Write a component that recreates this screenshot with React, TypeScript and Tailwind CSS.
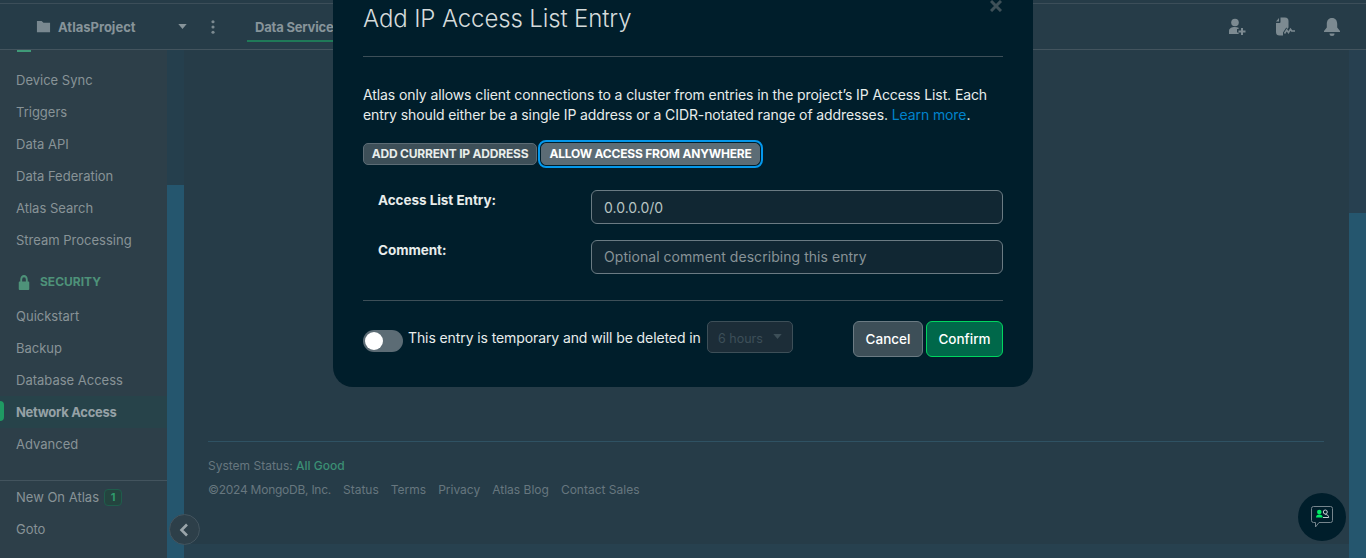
const topItems = ["Device Sync", "Triggers", "Data API", "Data Federation", "Atlas Search", "Stream Processing"];
const securityItems = ["Quickstart", "Backup", "Database Access", "Network Access", "Advanced"];
const footerLinks = ["Status", "Terms", "Privacy", "Atlas Blog", "Contact Sales"];

function NavItem({ label }: { label: string }) {
  const active = label === "Network Access";
  return (
    <div className={`relative flex h-8 items-center pl-4 pt-[1px] text-[13px] ${active ? "bg-[#27434a] font-bold tracking-[-0.3px] text-[#96a1a6]" : "text-[#889397]"}`}>
      {active && <span className="absolute left-0 top-[5px] h-[20px] w-1 rounded-r bg-[#1f9a63]" />}
      {label}
    </div>
  );
}

function Sidebar() {
  return (
    <aside className="flex w-[167px] shrink-0 flex-col bg-[#2d3f49]">
      <div className="ml-[17px] h-[2px] w-[14px] bg-[#3f9a78]" />
      <div className="mt-[12px]">
        {topItems.map((item) => (
          <NavItem key={item} label={item} />
        ))}
      </div>
      <div className="mt-[10px] flex h-8 items-center pl-[18px] text-[12px] font-bold text-[#4e9279]">
        <svg viewBox="0 0 16 16" className="h-[15px] w-[12px]" fill="currentColor" preserveAspectRatio="none">
          <path d="M3 7V5a5 5 0 0 1 10 0v2h1a1 1 0 0 1 1 1v7a1 1 0 0 1-1 1H2a1 1 0 0 1-1-1V8a1 1 0 0 1 1-1h1zm2.500 0h5V5a2.500 2.500 0 0 0-5 0v2z" />
        </svg>
        <span className="ml-[10px]">SECURITY</span>
      </div>
      <div className="mt-[2px]">
        {securityItems.map((item) => (
          <NavItem key={item} label={item} />
        ))}
      </div>
      <div className="mt-[20px] border-t border-[#43545e]">
        <div className="flex h-8 items-center pl-4 pt-[1px] text-[13px] text-[#889397]">
          New On Atlas
          <span className="ml-[5px] flex h-[17px] w-[18px] items-center justify-center rounded border border-[#1f5d4c] bg-[#24443f] text-[11px] font-bold text-[#2f9a6c]">1</span>
        </div>
        <div className="flex h-8 items-center pl-4 pt-[1px] text-[13px] text-[#889397]">Goto</div>
      </div>
    </aside>
  );
}

function TopBar() {
  return (
    <header className="h-[50px] shrink-0 border-b border-[#43545e] bg-[#263c48]">
      <div className="h-[4px] border-b border-[#3c4e59]" />
      <div className="flex h-[45px] items-center">
        <svg viewBox="0 0 16 16" className="ml-[36px] h-[15px] w-[15px]" fill="#798890">
          <path d="M1 2h5l2 2h7v10H1z" />
        </svg>
        <span className="ml-[7px] w-[77px] whitespace-nowrap pt-[2px] text-[13px] font-bold text-[#87949a]">AtlasProject</span>
        <svg viewBox="0 0 10 6" className="ml-[43px] h-[5px] w-[9px]" fill="#87949a">
          <path d="M0 0h10L5 6z" />
        </svg>
        <svg viewBox="0 0 4 16" className="ml-[24px] h-[14px] w-[4px]" fill="#7c8a91">
          <circle cx="2" cy="2" r="1.800" />
          <circle cx="2" cy="8" r="1.800" />
          <circle cx="2" cy="14" r="1.800" />
        </svg>
        <div className="relative ml-[32px] flex h-[28px] w-[100px] items-center pl-[8px] pt-[2px] whitespace-nowrap text-[13px] font-bold tracking-[-0.2px] text-[#87949a]">
          Data Services
          <span className="absolute bottom-[-1px] left-0 h-[2px] w-full bg-[#1f7a58]" />
        </div>
        <div className="ml-auto flex items-center pr-[26px]">
          <svg viewBox="0 0 18 18" className="h-[18px] w-[18px]" fill="#7c8a91">
            <circle cx="7" cy="4.500" r="3.800" />
            <path d="M1 16v-3c0-2.500 2.500-4 6-4 1.400 0 2.600.2 3.600.7V11H9v3.500h1.600V16z" />
            <path d="M13 10h2v2.500h2.500v2H15V17h-2v-2.500h-2.500v-2H13z" />
          </svg>
          <svg viewBox="0 0 20 19" className="ml-[29px] h-[19px] w-[20px]" fill="#7c8a91">
            <path d="M5.500.5H10a3.500 3.500 0 0 1 3.500 3.500v6.500l-1 1.500-1.200-1.500L8 15.500v3H4.500A3.500 3.500 0 0 1 1 15V6h3.500a1 1 0 0 0 1-1z" />
            <path d="M1 4.500 4 1v3.500z" />
            <path d="M9.500 16.500l2.200-3.500 1.800 2.500 2-3.200 1.200 1.700H20" fill="none" stroke="#7c8a91" strokeWidth="1.600" />
          </svg>
          <svg viewBox="0 0 16 18" className="ml-[29px] h-[18px] w-[16px]" fill="#7c8a91">
            <path d="M8 0c3.500 0 5.200 2.600 5.200 6v3.500L16 13v1H0v-1l2.800-3.500V6C2.800 2.600 4.500 0 8 0z" />
            <path d="M5.500 15.500h5A2.500 2.500 0 0 1 8 18a2.500 2.500 0 0 1-2.500-2.500z" />
          </svg>
        </div>
      </div>
    </header>
  );
}

function Main() {
  return (
    <main className="flex min-w-0 flex-1 flex-col bg-[#27414f]">
      <div className="flex h-[494px] flex-col bg-[#263c48] pl-[24px] pr-[25px]">
        <div className="flex-1" />
        <div className="h-[103px] border-t border-[#2f5263] pt-[15px] text-[12px] text-[#67777f]">
          <div className="h-[18px] leading-[18px]">
            System Status: <span className="font-medium text-[#3b8f74]">All Good</span>
          </div>
          <div className="mt-[6px] flex h-[18px] gap-[12px] leading-[18px]">
            <span className="tracking-[-0.25px]">©2024 MongoDB, Inc.</span>
            {footerLinks.map((link) => (
              <span key={link}>{link}</span>
            ))}
          </div>
        </div>
      </div>
    </main>
  );
}

function Modal() {
  return (
    <div className="absolute left-[333px] top-0 flex h-[387px] w-[700px] flex-col rounded-b-[20px] bg-[#001e2b] px-[30px] text-[#e8edeb]">
      <div className="flex h-[57px] shrink-0 border-b border-[#3d4f58]">
        <h2 className="mt-[3px] whitespace-nowrap text-[24px] leading-[32px] font-light tracking-[-0.13px] text-[#d5dbdb]">Add IP Access List Entry</h2>
        <svg viewBox="0 0 12 12" className="ml-auto mr-[1px] mt-0 h-[12px] w-[12px]" stroke="#3e5058" strokeWidth="3">
          <path d="M1 1l10 10M11 1 1 11" />
        </svg>
      </div>
      <p className="mt-[28px] text-[14px] leading-[20px] tracking-[-0.1px] text-[#e8edeb]">
        Atlas only allows client connections to a cluster from entries in the project’s IP Access List. Each entry should either be a single IP address or a CIDR-notated range of addresses. <span className="text-[#0083cc]">Learn more</span>.
      </p>
      <div className="mt-[18px] flex h-[22px] items-center">
        <button className="h-[22px] w-[174px] rounded-[5px] border border-[#5c6c75] bg-[#3d4f58] text-[12px] font-bold tracking-[-0.2px] whitespace-nowrap text-[#e8edeb]">ADD CURRENT IP ADDRESS</button>
        <button className="ml-[4px] h-[22px] w-[219px] rounded-[5px] border border-[#5c6c75] bg-[#5c6c75] text-[12px] font-bold tracking-[-0.2px] whitespace-nowrap text-white outline-2 outline-offset-[1px] outline-[#0498ec]">ALLOW ACCESS FROM ANYWHERE</button>
      </div>
      <div className="mt-[25px] flex h-[34px]">
        <label className="ml-[15px] w-[213px] text-[13.5px] font-bold leading-[20px] tracking-[-0.05px]">Access List Entry:</label>
        <div className="flex flex-1 items-center rounded-[6px] border border-[#6b7b83] bg-[#112733] pl-[12px] text-[14px] text-[#b8c4c2]">0.0.0.0/0</div>
      </div>
      <div className="mt-[16px] flex h-[34px]">
        <label className="ml-[15px] w-[213px] text-[13.5px] font-bold leading-[20px] tracking-[-0.05px]">Comment:</label>
        <div className="flex flex-1 items-center rounded-[6px] border border-[#6b7b83] bg-[#112733] pb-[1px] pl-[12px] text-[14px] tracking-[0.05px] text-[#889397]">Optional comment describing this entry</div>
      </div>
      <div className="mt-[26px] h-px shrink-0 bg-[#3d4f58]" />
      <div className="mt-[20px] flex h-[36px] items-start">
        <div className="mt-[9px] flex h-[22px] w-[40px] items-center rounded-full bg-[#5c6c75] pl-[2px]">
          <span className="h-[18px] w-[18px] rounded-full bg-white" />
        </div>
        <span className="ml-[5px] mt-[7px] w-[292px] whitespace-nowrap text-[14px] leading-[20px] tracking-[-0.1px] text-[#e8edeb]">This entry is temporary and will be deleted in</span>
        <div className="ml-[7px] flex h-[32px] w-[86px] items-center rounded-[5px] border border-[#3d4f58] bg-[#1c2d38] pl-[10px] text-[12.5px] text-[#3d4f58]">
          <span className="pt-[4px]">6 hours</span>
          <svg viewBox="0 0 10 6" className="ml-[10px] mb-[2px] h-[5px] w-[9px]" fill="#3d4f58">
            <path d="M0 0h10L5 6z" />
          </svg>
        </div>
        <button className="ml-auto h-[36px] w-[70px] rounded-[6px] border border-[#6b7b83] bg-[#3d4f58] pt-[1px] text-[13.5px] font-medium text-white">Cancel</button>
        <button className="ml-[3px] h-[36px] w-[77px] rounded-[6px] border border-[#00d65f] bg-[#00684a] pt-[1px] text-[13.5px] font-medium text-white">Confirm</button>
      </div>
    </div>
  );
}

export default function App() {
  return (
    <div className="relative flex h-[558px] w-[1366px] flex-col overflow-hidden bg-[#263c48] font-['Inter','Noto_Sans',sans-serif]">
      <TopBar />
      <div className="flex min-h-0 flex-1">
        <Sidebar />
        <div className="flex w-[17px] shrink-0 flex-col">
          <div className="h-[135px] bg-[#253f4d]" />
          <div className="flex-1 bg-[#25566e]" />
        </div>
        <Main />
        <div className="flex w-[17px] shrink-0 flex-col">
          <div className="h-[163px] bg-[#274050]" />
          <div className="flex-1 bg-[#25566e]" />
        </div>
      </div>
      <Modal />
      <button className="absolute left-[169px] top-[514px] flex h-[31px] w-[31px] items-center justify-center rounded-full border border-[#43545e] bg-[#2d3f49] pr-[1px]">
        <svg viewBox="0 0 10 14" className="h-[14px] w-[10px]" fill="none" stroke="#9aa5aa" strokeWidth="2.600">
          <path d="M8 1.500 2.500 7 8 12.500" />
        </svg>
      </button>
      <button className="absolute left-[1298px] top-[493px] flex h-[48px] w-[48px] items-center justify-center rounded-full bg-[#001e2b]">
        <svg viewBox="0 0 24 24" className="h-[24px] w-[24px]" fill="none">
          <path d="M3.500 1.500h17a2 2 0 0 1 2 2v12a2 2 0 0 1-2 2H9L5.500 22v-4.500h-2a2 2 0 0 1-2-2v-12a2 2 0 0 1 2-2z" stroke="#76858d" strokeWidth="1" />
          <circle cx="9.300" cy="7" r="2.300" fill="#00ed64" />
          <path d="M6 12.500c0-2 1.300-3 3.300-3s3.400 1 3.400 3z" fill="#00ed64" />
          <circle cx="15.300" cy="7" r="2" stroke="#c5cdd0" strokeWidth="1" />
          <path d="M13 12.500h5.700c0-2-1.300-3-3.400-3" stroke="#c5cdd0" strokeWidth="1" />
        </svg>
      </button>
    </div>
  );
}
